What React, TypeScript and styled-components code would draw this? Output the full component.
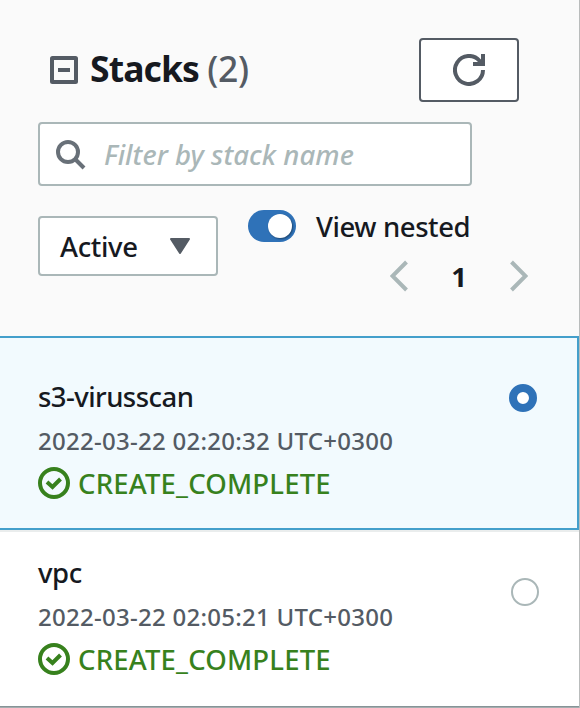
import React from "react";
import styled, { createGlobalStyle } from "styled-components";

const GlobalStyle = createGlobalStyle`
  *, *::before, *::after { box-sizing: border-box; }
  body { margin: 0; background: #fff; }
  button, input { font: inherit; color: inherit; }
`;

const Panel = styled.main`
  width: 580px;
  height: 708px;
  overflow: hidden;
  border-right: 1px solid #b9bcbc;
  background: #fff;
  color: #16191f;
  font-family: "Noto Sans", sans-serif;
  font-size: 27.5px;
  font-weight: 500;
  line-height: 36px;
`;

const Header = styled.header`
  height: 336px;
  padding: 38px 0 0 38px;
  background: #fafafa;
`;

const TitleBar = styled.div`
  display: flex;
  align-items: center;
  justify-content: space-between;
  width: 481px;
  height: 64px;
`;

const Heading = styled.div`
  display: flex;
  align-items: center;
  padding-left: 12px;
  gap: 12px;

  svg { display: block; }
`;

const Title = styled.h1`
  margin: 0;
  padding-bottom: 4px;
  font-size: 35.5px;
  font-weight: 700;
  line-height: 44px;
  letter-spacing: -0.9px;
  white-space: nowrap;
`;

const Count = styled.span`
  color: #545b64;
  font-weight: 500;
  letter-spacing: -0.3px;
`;

const RefreshButton = styled.button`
  display: grid;
  place-items: center;
  width: 100px;
  height: 64px;
  padding: 0;
  border: 2px solid #545b64;
  border-radius: 4px;
  background: #fff;
`;

const Search = styled.label`
  display: flex;
  align-items: center;
  gap: 18px;
  width: 434px;
  height: 64px;
  margin-top: 20px;
  padding: 2px 0 0 16px;
  border: 2px solid #aab7b8;
  border-radius: 4px;
  background: #fff;
`;

const SearchInput = styled.input`
  width: 340px;
  padding: 0;
  border: 0;
  outline: 0;
  background: none;
  letter-spacing: 0.05px;

  &::placeholder {
    color: #aab7b8;
    font-style: italic;
    opacity: 1;
  }
`;

const Controls = styled.div`
  display: flex;
  gap: 30px;
  margin-top: 24px;
`;

const Select = styled.button`
  display: flex;
  align-items: center;
  justify-content: space-between;
  width: 180px;
  height: 60px;
  margin-top: 6px;
  padding: 0 26px 0 20px;
  border: 2px solid #aab7b8;
  border-radius: 4px;
  background: #fff;
`;

const ViewControls = styled.div`
  width: 280px;
`;

const ToggleRow = styled.div`
  display: flex;
  gap: 20px;
  height: 32px;
  line-height: 34px;
`;

const Toggle = styled.button`
  display: flex;
  justify-content: flex-end;
  width: 48px;
  height: 32px;
  padding: 4px;
  border: 0;
  border-radius: 16px;
  background: #2f72b8;
`;

const Knob = styled.span`
  width: 24px;
  height: 24px;
  border-radius: 50%;
  background: #fff;
  box-shadow: 1px 1px 2px rgba(0, 0, 0, 0.4);
`;

const Pager = styled.nav`
  display: flex;
  align-items: center;
  justify-content: space-between;
  width: 138px;
  height: 32px;
  margin: 18px 0 0 142px;
  font-weight: 700;
`;

const Label = styled.span<{ $track?: number; $drop?: number }>`
  padding-top: ${({ $drop = 0 }) => $drop}px;
  letter-spacing: ${({ $track = 0 }) => $track}px;
  white-space: nowrap;
`;

const StackRow = styled.section<{ $selected?: boolean }>`
  display: flex;
  justify-content: space-between;
  height: ${({ $selected }) => ($selected ? 194 : 174)}px;
  padding: ${({ $selected }) => ($selected ? "41px 40px 0 38px" : "23px 40px 0 38px")};
  border: solid #449fcb;
  border-width: ${({ $selected }) => ($selected ? "2px 2px 2px 0" : "0")};
  background: ${({ $selected }) => ($selected ? "#f2fafe" : "#fff")};
`;

const Divider = styled.hr<{ $end?: boolean }>`
  height: 2px;
  margin: 0;
  border: 0;
  background: ${({ $end }) => ($end ? "linear-gradient(#78868a, #b2babb)" : "#eaeded")};
`;

const StackName = styled.div<{ $track: number }>`
  height: 36px;
  letter-spacing: ${({ $track }) => $track}px;
`;

const Timestamp = styled.div`
  height: 36px;
  margin-top: 8px;
  color: #545b64;
  font-size: 24px;
  letter-spacing: 0.27px;
`;

const Status = styled.div`
  display: flex;
  align-items: center;
  gap: 8px;
  height: 36px;
  margin-top: 6px;
  color: #37811d;
`;

const Radio = styled.span<{ $checked?: boolean }>`
  flex: none;
  width: 28px;
  height: 28px;
  margin-top: ${({ $checked }) => ($checked ? 5 : 23)}px;
  border: ${({ $checked }) => ($checked ? "8.3px solid #2f72b8" : "2px solid #aab7b8")};
  border-radius: 50%;
  background: #fff;
`;

const CollapseIcon = () => (
  <svg width="28" height="28" viewBox="0 0 28 28" fill="none" stroke="#545b64" strokeWidth="4">
    <rect x="2" y="2" width="24" height="24" rx="0.5" />
    <path d="M8 14h12" />
  </svg>
);

const RefreshIcon = () => (
  <svg width="32" height="32" viewBox="0 0 32 32" fill="none" stroke="#545b64" strokeWidth="4">
    <path d="M30 16A14 14 0 1 1 26.5 6.7L29 9.5" />
    <path d="M30 0v10H20" />
  </svg>
);

const SearchIcon = () => (
  <svg width="30" height="30" viewBox="0 0 30 30" fill="none" stroke="#687078" strokeWidth="4">
    <circle cx="12" cy="12" r="10" />
    <path d="M19 19l9 9" />
  </svg>
);

const CaretIcon = () => (
  <svg width="20" height="16" viewBox="0 0 20 16">
    <path d="M1 1h18l-9 14z" fill="#545b64" stroke="#545b64" strokeWidth="2" strokeLinejoin="round" />
  </svg>
);

const Chevron = ({ next = false }: { next?: boolean }) => (
  <svg width="18" height="32" viewBox="0 0 18 32" fill="none" stroke="#aab7b8" strokeWidth="4">
    <path d={next ? "M1.5 2l14 14-14 14" : "M16.5 2l-14 14 14 14"} />
  </svg>
);

const CheckIcon = () => (
  <svg width="32" height="32" viewBox="0 0 32 32" fill="none" stroke="#37811d" strokeWidth="4">
    <circle cx="16" cy="16" r="14" />
    <path d="M9 15l5.5 5L22.5 12" />
  </svg>
);

type Stack = { name: string; created: string; track: number; selected?: boolean };

const stacks: Stack[] = [
  { name: "s3-virusscan", created: "2022-03-22 02:20:32 UTC+0300", track: -0.55, selected: true },
  { name: "vpc", created: "2022-03-22 02:05:21 UTC+0300", track: -0.4 },
];

export default function App() {
  return (
    <>
      <GlobalStyle />
      <Panel>
        <Header>
          <TitleBar>
            <Heading>
              <CollapseIcon />
              <Title>
                Stacks <Count>(2)</Count>
              </Title>
            </Heading>
            <RefreshButton aria-label="Refresh">
              <RefreshIcon />
            </RefreshButton>
          </TitleBar>
          <Search>
            <SearchIcon />
            <SearchInput placeholder="Filter by stack name" />
          </Search>
          <Controls>
            <Select>
              <Label $track={-0.35} $drop={2}>Active</Label>
              <CaretIcon />
            </Select>
            <ViewControls>
              <ToggleRow>
                <Toggle role="switch" aria-checked="true" aria-label="View nested">
                  <Knob />
                </Toggle>
                <Label $track={-0.4}>View nested</Label>
              </ToggleRow>
              <Pager>
                <Chevron />
                <Label $drop={1}>1</Label>
                <Chevron next />
              </Pager>
            </ViewControls>
          </Controls>
        </Header>
        {stacks.map((stack, i) => (
          <React.Fragment key={stack.name}>
            <StackRow $selected={stack.selected}>
              <div>
                <StackName $track={stack.track}>{stack.name}</StackName>
                <Timestamp>{stack.created}</Timestamp>
                <Status>
                  <CheckIcon />
                  <Label $track={0.17} $drop={1}>CREATE_COMPLETE</Label>
                </Status>
              </div>
              <Radio $checked={stack.selected} />
            </StackRow>
            <Divider $end={i === stacks.length - 1} />
          </React.Fragment>
        ))}
      </Panel>
    </>
  );
}
